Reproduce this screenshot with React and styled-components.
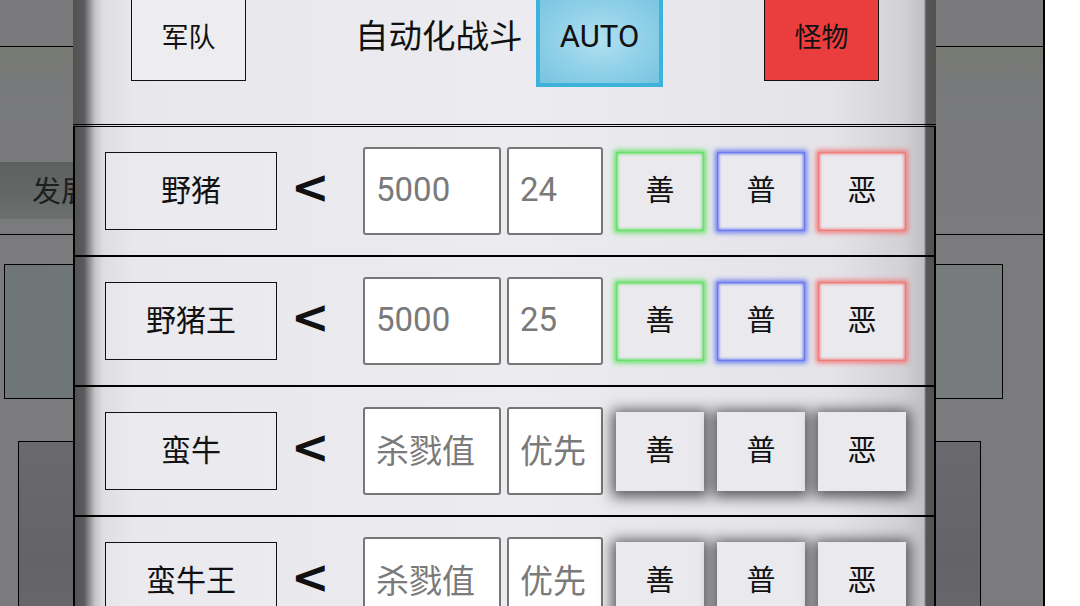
import React from "react";
import styled, { createGlobalStyle, css } from "styled-components";

const Global = createGlobalStyle`
  html, body { margin: 0; padding: 0; background: #fff; }
  body { font-family: Roboto, "Noto Sans CJK SC", sans-serif; }
  * { box-sizing: border-box; }
`;

const Stage = styled.div`
  position: relative;
  width: 1080px;
  height: 606px;
  overflow: hidden;
  background: #fff;
`;

/* ---------- dimmed page underneath ---------- */
const BgPage = styled.div`
  width: 1045px;
  height: 606px;
  background: #7b7b7d;
  border-right: 2px solid #000;
  display: flex;
  flex-direction: column;
  overflow: hidden;
  & > * { flex-shrink: 0; }
`;

const BgTop = styled.div`
  height: 47px;
  border-bottom: 1px solid #000;
  background: #7a7a7c;
`;

const BgSection = styled.div`
  height: 188px;
  border-bottom: 1px solid #000;
  background: linear-gradient(to bottom, #767a70 0, #78797a 30px, #7b7b7d 100%);
  padding-top: 115px;
`;

const DevButton = styled.div`
  width: 220px;
  height: 57px;
  background: linear-gradient(to bottom, #5c605e, #646866 60%, #6c706e);
  display: flex;
  align-items: center;
  padding: 0 0 3px 32px;
  font-size: 29px;
  color: #1e1e1e;
  font-family: "Noto Sans CJK SC", sans-serif;
`;

const BgCard = styled.div`
  margin: ${(p) => p.$m};
  height: ${(p) => p.$h}px;
  border: 1px solid #000;
  background: ${(p) => p.$bg};
`;

/* ---------- overlay panel ---------- */
const Panel = styled.div`
  position: absolute;
  left: 73px;
  top: 0;
  width: 863px;
  height: 606px;
  overflow: hidden;
  background: linear-gradient(
    to right,
    #525252 0,
    #5a5a5a 11px,
    #8c8c90 16px,
    #c4c4c8 22px,
    #dedee2 30px,
    #e8e8ec 60px,
    #ececf0 450px,
    #e4e4e8 760px,
    #d2d2d6 830px,
    #c0c0c4 851px,
    #565656 853px,
    #525252 863px
  );
  display: flex;
  flex-direction: column;
`;

const Header = styled.div`
  height: 125px;
  flex-shrink: 0;
  border-bottom: 1px solid #000;
  display: flex;
  align-items: flex-start;
  padding-left: 58px;
`;

const HeadButton = styled.div`
  margin-top: -8px;
  width: 115px;
  height: 89px;
  border: 1px solid #111;
  display: flex;
  align-items: center;
  justify-content: center;
  padding-bottom: 3px;
  font-family: "Noto Sans CJK SC", sans-serif;
  font-size: 27px;
  color: #111;
  background: ${(p) => (p.$danger ? "#ea3e3e" : "rgba(240,240,244,0.6)")};
  margin-left: ${(p) => p.$ml || 0}px;
`;

const Title = styled.div`
  margin-left: 109px;
  width: 167px;
  height: 72px;
  display: flex;
  align-items: center;
  white-space: nowrap;
  padding-bottom: 6px;
  font-family: "Noto Sans CJK SC", sans-serif;
  font-size: 33.5px;
  color: #111;
`;

const AutoButton = styled.div`
  margin-top: -8px;
  margin-left: 14px;
  width: 127px;
  height: 95px;
  border: 4px solid #3db2da;
  background: radial-gradient(ellipse at center, #b2e0f0 0%, #8fd0e8 55%, #78c4e0 100%);
  display: flex;
  align-items: center;
  justify-content: center;
  padding-bottom: 6px;
  font-size: 31px;
  color: #111;
`;

const Rows = styled.div`
  margin-top: 1px;
  border-top: 1px solid #000;
  display: flex;
  flex-direction: column;
`;

const Row = styled.div`
  height: 130px;
  flex-shrink: 0;
  border-left: 2px solid #000;
  border-right: 2px solid #000;
  border-bottom: 2px solid #000;
  display: flex;
  align-items: center;
  padding-left: 30px;
`;

const NameBox = styled.div`
  width: 172px;
  height: 78px;
  border: 1px solid #111;
  display: flex;
  align-items: center;
  justify-content: center;
  padding-bottom: 6px;
  font-family: "Noto Sans CJK SC", sans-serif;
  font-size: 30px;
  color: #111;
  background: rgba(236, 236, 242, 0.5);
`;

const Less = styled.div`
  width: 86px;
  padding-left: 14px;
  font-family: "DejaVu Sans", sans-serif;
  font-weight: bold;
  font-size: 46px;
  color: #111;
  line-height: 1;
  margin-top: -8px;
`;

const Field = styled.div`
  width: ${(p) => p.$w}px;
  height: 88px;
  margin-right: ${(p) => p.$mr}px;
  background: #fff;
  border: 2px solid #767676;
  border-radius: 3px;
  display: flex;
  align-items: center;
  padding: 0 0 4px 11px;
  font-family: Roboto, "Noto Sans CJK SC", sans-serif;
  font-size: 33px;
  color: #7a7a7a;
  white-space: nowrap;
  overflow: hidden;
`;

const toneColor = { good: "#6ae06a", normal: "#6c7cf0", evil: "#f07c7c" };

const Choice = styled.div`
  width: 88px;
  height: 79px;
  margin-right: 13px;
  display: flex;
  align-items: center;
  justify-content: center;
  padding-bottom: 6px;
  font-family: "Noto Sans CJK SC", sans-serif;
  font-size: 29px;
  color: #111;
  background: #e9e9ee;
  ${(p) =>
    p.$tone
      ? css`
          border: 1px solid ${toneColor[p.$tone]};
          box-shadow: 0 0 5px 2px ${toneColor[p.$tone]},
            inset 0 0 3px 1px ${toneColor[p.$tone]};
        `
      : css`
          box-shadow: 0 2px 13px 4px rgba(0, 0, 0, 0.62);
        `}
`;

const rows = [
  { name: "野猪", kill: "5000", pri: "24", active: true },
  { name: "野猪王", kill: "5000", pri: "25", active: true },
  { name: "蛮牛", kill: "杀戮值", pri: "优先", active: false },
  { name: "蛮牛王", kill: "杀戮值", pri: "优先", active: false },
];

export default function App() {
  return (
    <>
      <Global />
      <Stage>
        <BgPage>
          <BgTop />
          <BgSection>
            <DevButton>发展</DevButton>
          </BgSection>
          <BgCard
            $m="29px 40px 0 4px"
            $h={135}
            $bg="linear-gradient(to right, #6e7678, #727a7c 50%, #777b7b)"
          />
          <BgCard
            $m="42px 62px 0 18px"
            $h={200}
            $bg="linear-gradient(to bottom, #6a6a6e, #646468 60%, #68686c)"
          />
        </BgPage>
        <Panel>
          <Header>
            <HeadButton>军队</HeadButton>
            <Title>自动化战斗</Title>
            <AutoButton>AUTO</AutoButton>
            <HeadButton $danger $ml={101}>
              怪物
            </HeadButton>
          </Header>
          <Rows>
            {rows.map((r) => (
              <Row key={r.name}>
                <NameBox>{r.name}</NameBox>
                <Less>&lt;</Less>
                <Field $w={138} $mr={6}>
                  {r.kill}
                </Field>
                <Field $w={96} $mr={13}>
                  {r.pri}
                </Field>
                <Choice $tone={r.active ? "good" : null}>善</Choice>
                <Choice $tone={r.active ? "normal" : null}>普</Choice>
                <Choice $tone={r.active ? "evil" : null}>恶</Choice>
              </Row>
            ))}
          </Rows>
        </Panel>
      </Stage>
    </>
  );
}
